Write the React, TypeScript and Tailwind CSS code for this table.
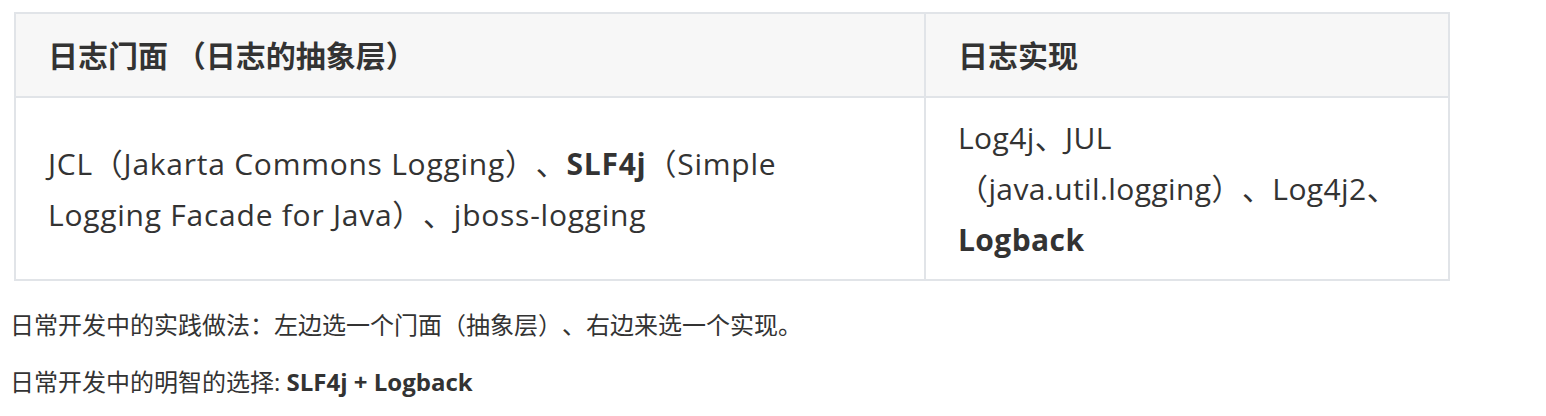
import React from 'react';

export default function App() {
  return (
    <div className="w-[1546px] h-[416px] bg-white text-[#333] pl-[10px] pt-[12px] font-['Open_Sans','Noto_Sans_CJK_SC',sans-serif] [text-spacing-trim:space-all]">
      <table className="ml-[4px] border-collapse text-[30px] leading-[51px]">
        <thead>
          <tr className="bg-[#f7f7f7] h-[84px]">
            <th className="w-[910px] border-2 border-[#e1e4e8] px-[32px] text-left font-bold">
              日志门面 （日志的抽象层）
            </th>
            <th className="w-[524px] border-2 border-[#e1e4e8] px-[32px] text-left font-bold">
              日志实现
            </th>
          </tr>
        </thead>
        <tbody>
          <tr className="h-[180px]">
            <td className="border-2 border-[#e1e4e8] px-[32px] align-middle tracking-[0.75px]">
              JCL（Jakarta Commons Logging）、<b>SLF4j</b>（Simple
              <br />
              Logging Facade for Java）、jboss-logging
            </td>
            <td className="border-2 border-[#e1e4e8] px-[32px] py-[14px] align-middle tracking-[0.4px]">
              Log4j、JUL
              <br />
              （java.util.logging）、Log4j2、
              <br />
              <b>Logback</b>
            </td>
          </tr>
        </tbody>
      </table>
      <p className="mt-[26px] text-[24px] leading-[36px]">日常开发中的实践做法：左边选一个门面（抽象层）、右边来选一个实现。</p>
      <p className="mt-[21px] text-[24px] leading-[36px]">
        日常开发中的明智的选择: <b>SLF4j + Logback</b>
      </p>
    </div>
  );
}
